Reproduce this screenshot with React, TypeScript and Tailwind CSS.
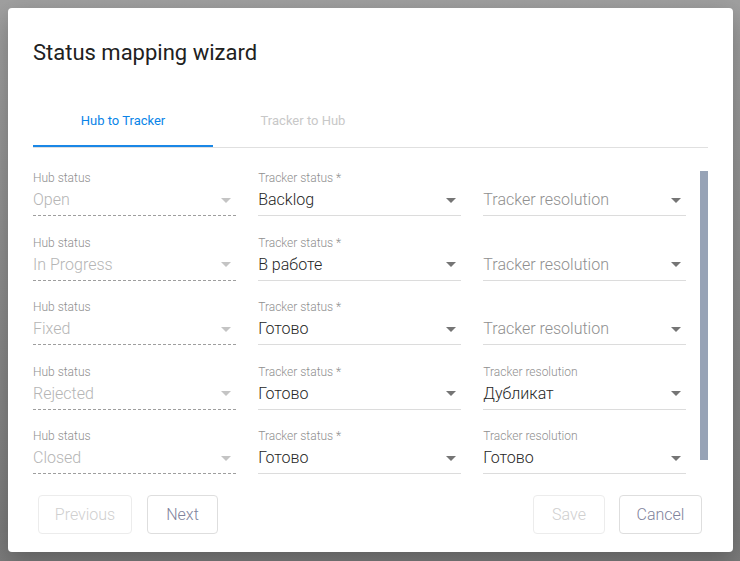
import React from "react";

type Row = {
  hub: string;
  tracker: string;
  resolution?: string;
};

const rows: Row[] = [
  { hub: "Open", tracker: "Backlog" },
  { hub: "In Progress", tracker: "В работе" },
  { hub: "Fixed", tracker: "Готово" },
  { hub: "Rejected", tracker: "Готово", resolution: "Дубликат" },
  { hub: "Closed", tracker: "Готово", resolution: "Готово" },
];

function Caret({ disabled }: { disabled?: boolean }) {
  return (
    <svg width="10" height="5" viewBox="0 0 10 5" className="shrink-0 mr-[5px]">
      <path d="M0 0L10 0L5 5Z" fill={disabled ? "#c4c4c4" : "#757575"} />
    </svg>
  );
}

function SelectField({
  label,
  value,
  placeholder,
  disabled,
}: {
  label?: string;
  value?: string;
  placeholder?: string;
  disabled?: boolean;
}) {
  return (
    <div
      className={
        "flex flex-col pb-[3px] border-b " +
        (disabled ? "border-dashed border-[#9e9e9e]" : "border-solid border-[#dcdcdc]")
      }
    >
      <div className="h-[16px] text-[12px] leading-[16px] font-light text-[#8f8f8f]">{label ?? ""}</div>
      <div className="mt-[2px] h-[24px] flex items-center justify-between">
        <span
          className={
            "text-[16px] leading-[24px] font-light " +
            (disabled ? "text-[#b5b5b5]" : value ? "text-[#262626]" : "text-[#8f8f8f]")
          }
        >
          {value ?? placeholder}
        </span>
        <Caret disabled={disabled} />
      </div>
    </div>
  );
}

export default function App() {
  return (
    <div
      className="w-[740px] h-[561px] overflow-hidden bg-gradient-to-b from-[#a0a0a0] to-[#7b7b7b] pl-[8px] pt-[8px]"
      style={{ fontFamily: "Roboto, 'Noto Sans', sans-serif" }}
    >
      <div className="w-[725px] h-[544px] bg-white rounded-[4px] shadow-[0_8px_24px_rgba(0,0,0,0.25)] flex flex-col px-[25px] pt-[29px]">
        <h2 className="text-[22px] leading-[32px] text-[#212121] font-normal">Status mapping wizard</h2>

        <div className="mt-[31px] flex border-b border-[#e0e0e0]">
          <div className="w-[180px] h-[47px] flex flex-col items-center justify-between">
            <span className="mt-[13px] text-[13px] leading-[16px] text-[#0a84e8]">Hub to Tracker</span>
            <div className="w-full h-[2px] bg-[#1a87e6]" />
          </div>
          <div className="w-[180px] h-[47px] flex flex-col items-center">
            <span className="mt-[13px] text-[13px] leading-[16px] text-[#c8c8c8]">Tracker to Hub</span>
          </div>
        </div>

        <div className="flex h-[330px] overflow-hidden">
          <div className="w-[653px] pt-[22px] flex flex-col">
            {rows.map((r) => (
              <div key={r.hub} className="h-[64.5px] shrink-0 grid grid-cols-3 items-start gap-x-[22.5px]">
                <SelectField label="Hub status" value={r.hub} disabled />
                <SelectField label="Tracker status *" value={r.tracker} />
                <SelectField
                  label={r.resolution ? "Tracker resolution" : undefined}
                  value={r.resolution}
                  placeholder="Tracker resolution"
                />
              </div>
            ))}
          </div>
          <div className="ml-[14px] w-[8px] mt-[23px] h-[289px] bg-[#97a3b6]" />
        </div>

        <div className="mt-auto mb-[18px] pl-[5px] flex items-center">
          <button className="w-[94px] h-[39px] rounded-[4px] border border-[#ececec] text-[16px] font-light text-[#cfcfcf]">
            Previous
          </button>
          <button className="ml-[15px] w-[71px] h-[39px] rounded-[4px] border border-[#dedede] text-[16px] font-light text-[#7f839c]">
            Next
          </button>
          <div className="flex-1" />
          <button className="w-[72px] h-[39px] rounded-[4px] border border-[#ececec] text-[16px] font-light text-[#cfcfcf]">
            Save
          </button>
          <button className="ml-[14px] mr-[6px] w-[83px] h-[39px] rounded-[4px] border border-[#dedede] text-[16px] font-light text-[#7f839c]">
            Cancel
          </button>
        </div>
      </div>
    </div>
  );
}
